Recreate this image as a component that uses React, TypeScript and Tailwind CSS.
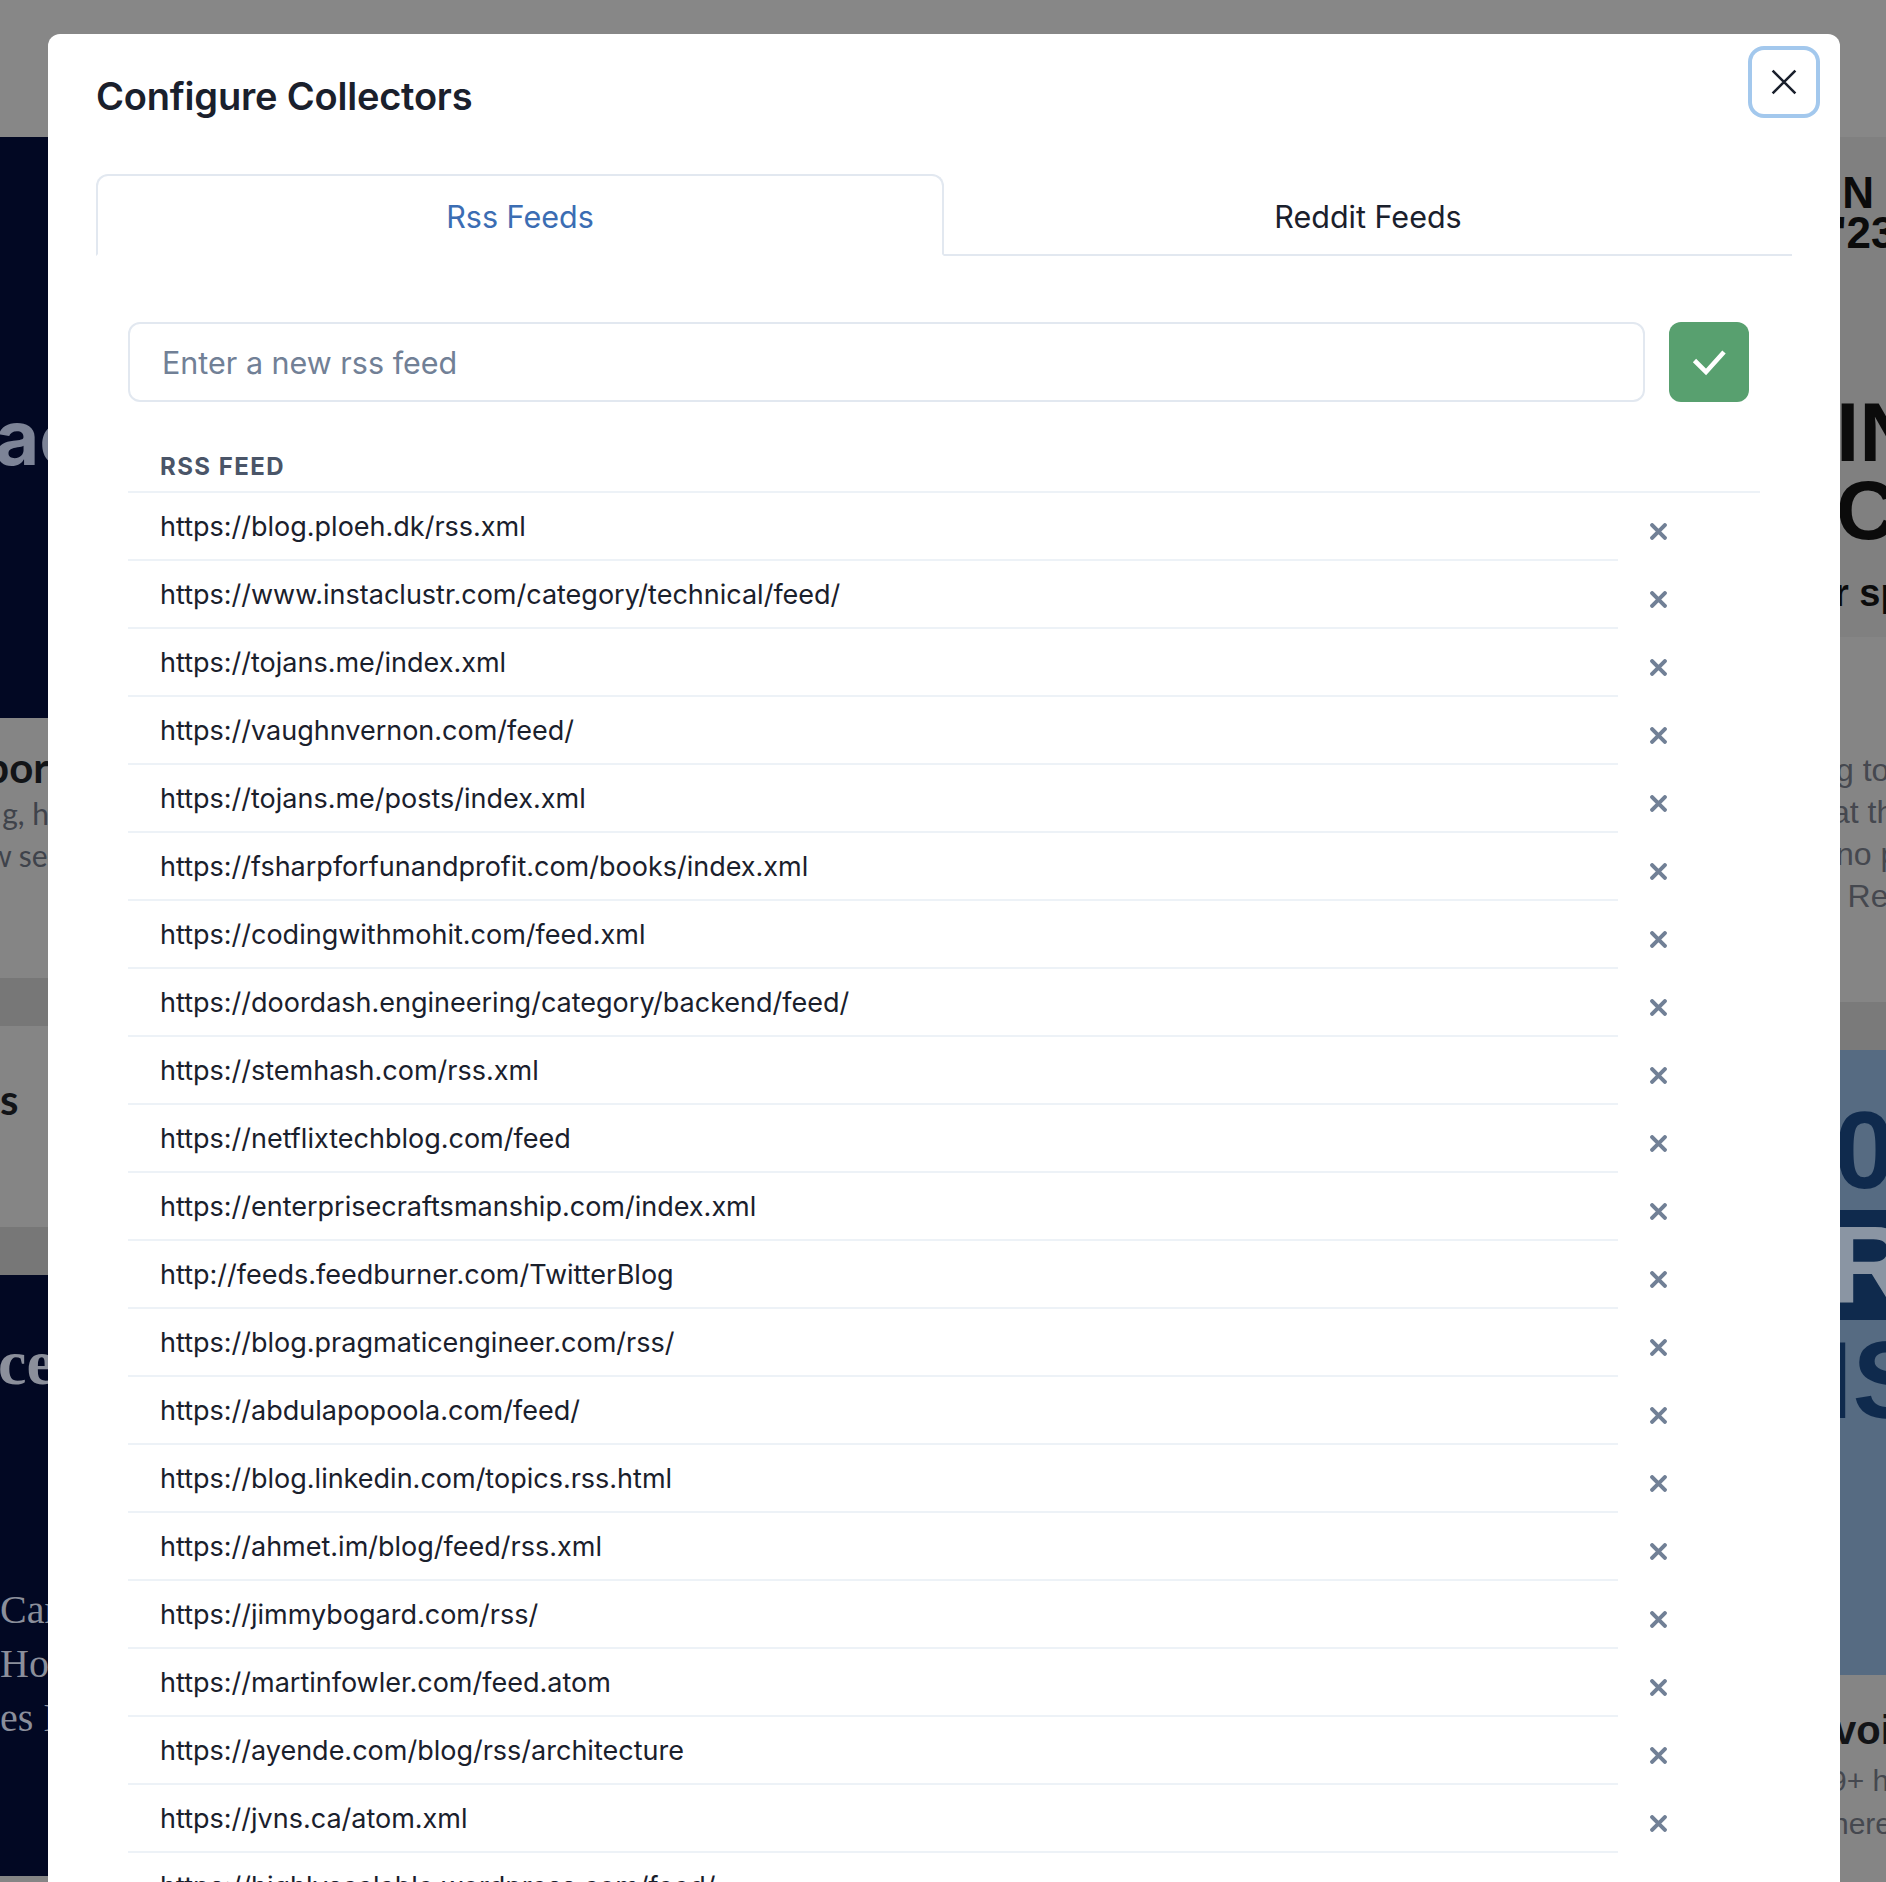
import React, { useState } from 'react'

const feeds = [
  'https://blog.ploeh.dk/rss.xml',
  'https://www.instaclustr.com/category/technical/feed/',
  'https://tojans.me/index.xml',
  'https://vaughnvernon.com/feed/',
  'https://tojans.me/posts/index.xml',
  'https://fsharpforfunandprofit.com/books/index.xml',
  'https://codingwithmohit.com/feed.xml',
  'https://doordash.engineering/category/backend/feed/',
  'https://stemhash.com/rss.xml',
  'https://netflixtechblog.com/feed',
  'https://enterprisecraftsmanship.com/index.xml',
  'http://feeds.feedburner.com/TwitterBlog',
  'https://blog.pragmaticengineer.com/rss/',
  'https://abdulapopoola.com/feed/',
  'https://blog.linkedin.com/topics.rss.html',
  'https://ahmet.im/blog/feed/rss.xml',
  'https://jimmybogard.com/rss/',
  'https://martinfowler.com/feed.atom',
  'https://ayende.com/blog/rss/architecture',
  'https://jvns.ca/atom.xml',
  'https://highlyscalable.wordpress.com/feed/',
]

const RemoveIcon = () => (
  <svg width="17" height="17" viewBox="0 0 16 16" fill="none">
    <path d="M2 2L14 14M14 2L2 14" stroke="#718096" strokeWidth="3.8" strokeLinecap="round" />
  </svg>
)

// left edge of the page behind the overlay
const LeftStrip = () => (
  <div className="flex w-[48px] flex-col overflow-hidden">
    <div className="flex h-[581px] flex-col bg-[#020823] pt-[262px]">
      <div className="flex w-[84px] justify-end">
        <span className="whitespace-nowrap text-[76px] font-bold leading-none text-[#7d8497]">ac</span>
      </div>
    </div>
    <div className="flex h-[260px] flex-col bg-[#858585] pt-[24px] font-['Lato',sans-serif]">
      <div className="flex w-[70px] justify-end">
        <span className="whitespace-nowrap text-[42px] font-bold leading-[50px] text-[#121417]">pora</span>
      </div>
      <div className="flex w-[66px] justify-end">
        <span className="whitespace-nowrap text-[30px] leading-[42px] text-[#3f434b]">g, ho</span>
      </div>
      <div className="flex w-[62px] justify-end">
        <span className="whitespace-nowrap text-[30px] leading-[42px] text-[#3f434b]">w sec</span>
      </div>
    </div>
    <div className="h-[48px] bg-[#777777]" />
    <div className="flex h-[201px] flex-col bg-[#858585] pt-[48px] font-['Lato',sans-serif]">
      <span className="whitespace-nowrap text-[42px] font-bold leading-[50px] text-[#121417]">s</span>
    </div>
    <div className="h-[48px] bg-[#777777]" />
    <div className="flex h-[601px] flex-col bg-[#020823] pt-[52px] font-['Liberation_Serif',serif] text-[#8b8f9b]">
      <span className="-ml-[2px] whitespace-nowrap text-[64px] font-bold leading-[72px]">ce</span>
      <span className="mt-[184px] whitespace-nowrap text-[40px] leading-[54px]">Car</span>
      <span className="whitespace-nowrap text-[40px] leading-[54px]">Ho</span>
      <span className="whitespace-nowrap text-[40px] leading-[54px]">es I</span>
    </div>
  </div>
)

// right edge of the page behind the overlay
const RightStrip = () => (
  <div className="flex w-[46px] flex-col overflow-hidden font-['Liberation_Sans',sans-serif]">
    <div className="flex h-[500px] flex-col bg-[#808080] pt-[36px] text-[#0b0b0b]">
      <span className="-ml-[10px] whitespace-nowrap text-[44px] font-bold leading-[40px]">IN</span>
      <span className="-ml-[4px] whitespace-nowrap text-[44px] font-bold leading-[40px]">'23</span>
      <span className="mt-[140px] -ml-[4px] whitespace-nowrap text-[84px] font-bold leading-[78px]">IN</span>
      <span className="-ml-[4px] whitespace-nowrap text-[84px] font-bold leading-[78px]">CI</span>
      <span className="-ml-[6px] mt-[22px] whitespace-nowrap text-[38px] font-bold leading-[44px]">r sp</span>
    </div>
    <div className="flex h-[365px] flex-col bg-[#858585] pt-[112px] text-[32px] leading-[42px] text-[#45484f]">
      <span className="-ml-[4px] whitespace-nowrap">g to</span>
      <span className="-ml-[8px] whitespace-nowrap">at th</span>
      <span className="-ml-[4px] whitespace-nowrap">no p</span>
      <span className="-ml-[12px] whitespace-nowrap">) Re</span>
    </div>
    <div className="h-[48px] bg-[#7a7a7a]" />
    <div className="flex h-[625px] flex-col bg-[#566b82] pt-[40px] text-[#0f2a4d]">
      <span className="-ml-[6px] whitespace-nowrap text-[110px] font-bold leading-[120px]">0</span>
      <span className="-ml-[10px] whitespace-nowrap bg-[#0f2a4d] text-[110px] font-bold leading-[110px] text-[#8a95a3]">R</span>
      <span className="-ml-[18px] whitespace-nowrap text-[110px] font-bold leading-[120px]">IS</span>
    </div>
    <div className="flex flex-1 flex-col bg-[#858585] pt-[30px]">
      <span className="-ml-[6px] whitespace-nowrap text-[40px] font-bold leading-[50px] text-[#121417]">voi</span>
      <span className="-ml-[10px] mt-[4px] whitespace-nowrap text-[30px] leading-[44px] text-[#45484f]">9+ h</span>
      <span className="-ml-[8px] whitespace-nowrap text-[30px] leading-[42px] text-[#45484f]">here</span>
    </div>
  </div>
)

export default function App() {
  const [tab, setTab] = useState(0)
  const [value, setValue] = useState('')

  return (
    <div className="relative h-[1882px] w-[1886px] overflow-hidden bg-[#858585] font-['Inter',sans-serif]">
      {/* Page under the overlay */}
      <div className="flex h-full flex-col">
        <div className="h-[137px] shrink-0 bg-[#878787]" />
        <div className="flex flex-1 justify-between">
          <LeftStrip />
          <RightStrip />
        </div>
      </div>

      {/* Modal */}
      <div className="absolute left-[48px] top-[34px] w-[1792px] rounded-t-[12px] bg-white pb-[40px]">
        <h2 className="px-[48px] py-[32px] text-[38px] font-semibold leading-[60px] tracking-[-0.2px] text-[#1a202c]">
          Configure Collectors
        </h2>
        <button className="absolute right-[24px] top-[16px] flex h-[64px] w-[64px] items-center justify-center rounded-[12px] bg-white ring-4 ring-[#a3c8ed]">
          <svg width="26" height="26" viewBox="0 0 24 24" fill="none">
            <path d="M1.5 1.5L22.5 22.5M22.5 1.5L1.5 22.5" stroke="#1a202c" strokeWidth="2.4" />
          </svg>
        </button>

        <div className="px-[48px] pt-[16px]">
          {/* Tabs */}
          <div className="flex border-b-2 border-[#e2e8f0]">
            {['Rss Feeds', 'Reddit Feeds'].map((label, i) => (
              <button
                key={label}
                onClick={() => setTab(i)}
                className={`-mb-[2px] flex h-[82px] flex-1 items-center justify-center rounded-t-[12px] border-2 pt-[4px] text-[30.5px] leading-[48px] ${
                  tab === i
                    ? 'border-[#e2e8f0] border-b-white text-[#3b6db3]'
                    : 'border-transparent text-[#1a202c]'
                }`}
              >
                {label}
              </button>
            ))}
          </div>

          {/* Panel */}
          <div className="px-[32px]">
            <div className="mt-[66px] flex gap-[24px] pr-[11px]">
              <input
                value={value}
                onChange={(e) => setValue(e.target.value)}
                placeholder="Enter a new rss feed"
                className="h-[80px] flex-1 rounded-[12px] border-2 border-[#e2e8f0] bg-white pl-[32px] text-[30.5px] text-[#1a202c] outline-none placeholder:text-[#718096]"
              />
              <button className="flex h-[80px] w-[80px] items-center justify-center rounded-[12px] bg-[#58a06f]">
                <svg width="80" height="80" viewBox="0 0 80 80" fill="none">
                  <path d="M25.5 38.5L37 50L55 30" stroke="white" strokeWidth="4.6" />
                </svg>
              </button>
            </div>

            <div className="mt-[41px]">
              <div className="border-b-2 border-[#edf2f7] py-[8px] pl-[32px] text-[24px] font-bold uppercase leading-[32px] tracking-[0.06em] text-[#4a5568]">
                Rss Feed
              </div>
              {feeds.map((feed) => (
                <div key={feed} className="flex">
                  <div className="flex h-[68px] flex-1 items-center border-b-2 border-[#edf2f7] pl-[32px] pt-[3px] text-[27px] text-[#1a202c]">
                    {feed}
                  </div>
                  <div className="flex w-[142px] items-center">
                    <button className="flex h-[68px] w-[80px] items-center justify-center pt-[8px]">
                      <RemoveIcon />
                    </button>
                  </div>
                </div>
              ))}
            </div>
          </div>
        </div>
      </div>
    </div>
  )
}
